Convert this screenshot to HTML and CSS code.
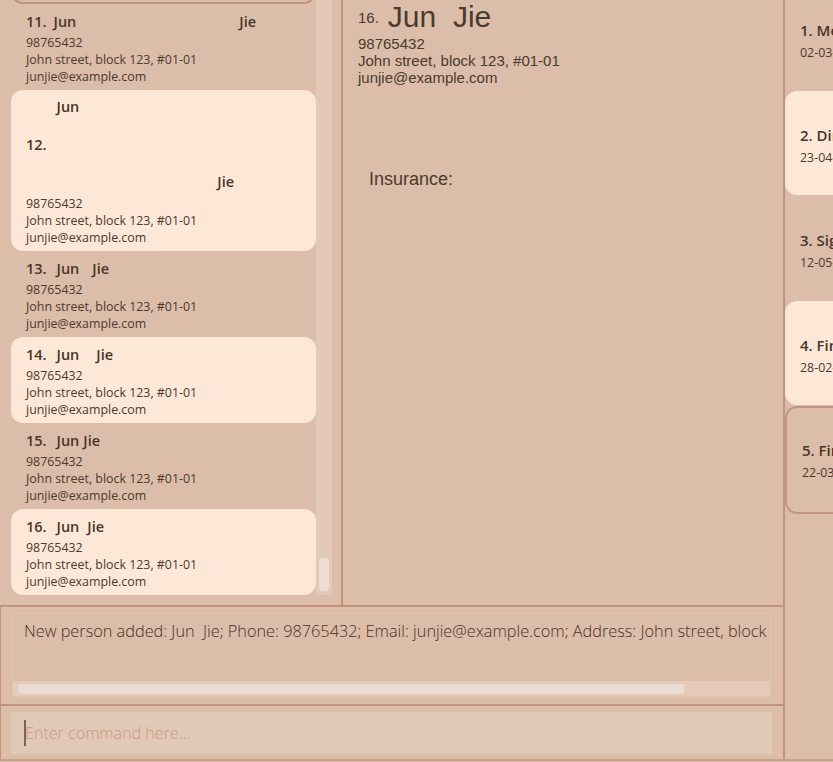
FILE: index.html
```html
<!DOCTYPE html>
<html lang="en">
<head>
<meta charset="utf-8">
<title>Address Book</title>
<link rel="stylesheet" href="styles.css">
</head>
<body>
<div class="app">
  <div class="main">
    <div class="top">
      <div class="list-panel">
        <div class="list">
          <div class="card selected first">
            <div class="name-row"><span class="idx">10.</span><span class="nm">Jun</span><span class="nm g4">Jie</span></div>
            <div class="info">
              <div class="line">98765432</div>
              <div class="line">John street, block 123, #01-01</div>
              <div class="line">junjie@example.com</div>
            </div>
          </div>
          <div class="card">
            <div class="name-row"><span class="idx narrow">11.</span><span class="nm">Jun</span><span class="nm g163">Jie</span></div>
            <div class="info">
              <div class="line">98765432</div>
              <div class="line">John street, block 123, #01-01</div>
              <div class="line">junjie@example.com</div>
            </div>
          </div>
          <div class="card hl tall-card">
            <div class="name-row tall"><span class="idx">12.</span><div class="split"><span class="nm up">Jun</span><span class="nm down g138">Jie</span></div></div>
            <div class="info">
              <div class="line">98765432</div>
              <div class="line">John street, block 123, #01-01</div>
              <div class="line">junjie@example.com</div>
            </div>
          </div>
          <div class="card">
            <div class="name-row"><span class="idx">13.</span><span class="nm">Jun</span><span class="nm g13">Jie</span></div>
            <div class="info">
              <div class="line">98765432</div>
              <div class="line">John street, block 123, #01-01</div>
              <div class="line">junjie@example.com</div>
            </div>
          </div>
          <div class="card hl">
            <div class="name-row"><span class="idx">14.</span><span class="nm">Jun</span><span class="nm g17">Jie</span></div>
            <div class="info">
              <div class="line">98765432</div>
              <div class="line">John street, block 123, #01-01</div>
              <div class="line">junjie@example.com</div>
            </div>
          </div>
          <div class="card">
            <div class="name-row"><span class="idx">15.</span><span class="nm">Jun</span><span class="nm g4">Jie</span></div>
            <div class="info">
              <div class="line">98765432</div>
              <div class="line">John street, block 123, #01-01</div>
              <div class="line">junjie@example.com</div>
            </div>
          </div>
          <div class="card hl">
            <div class="name-row"><span class="idx">16.</span><span class="nm">Jun</span><span class="nm g8">Jie</span></div>
            <div class="info">
              <div class="line">98765432</div>
              <div class="line">John street, block 123, #01-01</div>
              <div class="line">junjie@example.com</div>
            </div>
          </div>
        </div>
        <div class="vscroll"><div class="vthumb"></div></div>
      </div>
      <div class="detail">
        <div class="d-name"><span class="d-idx">16.</span><span class="d-full">Jun&nbsp;&nbsp;Jie</span></div>
        <div class="d-info">
          <div class="d-line">98765432</div>
          <div class="d-line">John street, block 123, #01-01</div>
          <div class="d-line">junjie@example.com</div>
        </div>
        <div class="d-ins">Insurance:</div>
      </div>
    </div>
    <div class="result">
      <div class="result-inner">
        <div class="result-text">New person added: Jun&nbsp;&nbsp;Jie; Phone: 98765432; Email: junjie@example.com; Address: John street, block 123, #01-01; Tags: </div>
        <div class="hscroll"><div class="hthumb"></div></div>
      </div>
    </div>
    <div class="command">
      <div class="cmd-field"><span class="caret"></span><span class="placeholder">Enter command here...</span></div>
    </div>
  </div>
  <div class="events">
    <div class="event-list">
      <div class="ev first"><div class="ev-title">1. Meeting with client</div><div class="ev-date">02-03-2024 10:00</div></div>
      <div class="ev hl"><div class="ev-title">2. Dinner appointment</div><div class="ev-date">23-04-2024 19:00</div></div>
      <div class="ev"><div class="ev-title">3. Sign contract</div><div class="ev-date">12-05-2024 14:00</div></div>
      <div class="ev hl"><div class="ev-title">4. Financial review</div><div class="ev-date">28-02-2024 09:00</div></div>
      <div class="ev selected"><div class="ev-title">5. Final check</div><div class="ev-date">22-03-2024 16:00</div></div>
    </div>
  </div>
</div>
</body>
</html>
```
FILE: styles.css
```css
* { box-sizing: border-box; margin: 0; padding: 0; }
html, body { width: 833px; height: 762px; overflow: hidden; background: #dcbda9; }
body { font-family: "Open Sans", "Noto Sans", sans-serif; color: #4a3a2f; }

.app { display: flex; height: 761px; border-bottom: 2px solid #c7a08a; }
.main { width: 785px; flex: none; display: flex; flex-direction: column; border-right: 2px solid #c2927a; }

.top { height: 605px; display: flex; flex: none; }
.list-panel { width: 343px; flex: none; display: flex; padding: 0 9px 10px 11px; border-right: 2px solid #c2927a; }
.list { width: 305px; flex: none; overflow: hidden; }

.card { height: 86px; padding: 6px 15px; border-radius: 12px; }
.card.hl { background: #fde8d8; }
.card.selected { border: 2px solid #c2927a; padding: 4px 13px; }
.card.first { margin-top: -82px; }
.card.tall-card { height: 161px; }

.name-row { height: 22px; display: flex; align-items: center; font-weight: 600; font-size: 14.5px; color: #473629; }
.name-row.tall { height: 97px; }
.idx { margin-right: 10px; }
.idx.narrow { margin-right: 7px; }
.split { display: flex; align-self: stretch; }
.nm.up { align-self: flex-start; line-height: 22px; }
.nm.down { align-self: flex-end; line-height: 22px; }
.g4 { margin-left: 4px; }
.g8 { margin-left: 8px; }
.g13 { margin-left: 13px; }
.g17 { margin-left: 17px; }
.g138 { margin-left: 138px; }
.g163 { margin-left: 163px; }

.info { padding-top: 2px; }
.line { font-size: 12.4px; line-height: 17px; color: #4a3a2f; white-space: nowrap; }

.vscroll { width: 16px; flex: none; background: #e2c9b8; display: flex; flex-direction: column; justify-content: flex-end; padding: 0 3px 4px; }
.vthumb { height: 33px; background: #ecdcd2; border-radius: 3px; }

.detail { flex: 1; padding: 0 0 0 15px; font-family: "Liberation Sans", Arial, sans-serif; color: #4a3a2f; }
.d-name { height: 34px; display: flex; align-items: center; }
.d-idx { font-size: 15px; margin-right: 9px; }
.d-full { font-size: 30px; }
.d-info { padding-top: 1px; }
.d-line { font-size: 15px; line-height: 17px; }
.d-ins { font-size: 18px; margin: 83px 0 0 11px; }

.result { height: 99px; flex: none; border-top: 2px solid #c2927a; border-left: 1px solid #c2927a; padding: 6px 12px 7px 11px; }
.result-inner { height: 84px; border: 1px solid #dfc4b1; display: flex; flex-direction: column; justify-content: space-between; overflow: hidden; }
.result-text { font-size: 16.3px; font-weight: 300; padding: 6px 0 0 11px; white-space: nowrap; color: #4a3026; }
.hscroll { height: 15px; flex: none; background: #e3cab9; padding: 3px 0 2px 5px; }
.hthumb { width: 666px; height: 10px; background: #eddcd2; border-radius: 3px; }

.command { flex: 1; border-top: 2px solid #c2927a; border-left: 1px solid #c2927a; padding: 6px 11px 5px 10px; }
.cmd-field { height: 42px; background: #e2c8b6; display: flex; align-items: center; padding-left: 13px; }
.caret { width: 2px; height: 26px; background: #7d6556; }
.placeholder { font-size: 16.1px; font-weight: 300; color: #c99a80; margin-left: -1px; }

.events { flex: 1; overflow: hidden; }
.event-list { width: 300px; }
.ev { height: 104px; margin-bottom: 1px; padding: 33px 15px 0; border-radius: 12px; white-space: nowrap; }
.ev.first { margin-top: -14px; }
.ev.hl { background: #fde8d8; }
.ev.selected { border: 2px solid #c49580; padding: 31px 13px 0 15px; height: 108px; }
.ev-title { font-size: 15px; font-weight: 600; line-height: 22px; color: #473629; }
.ev-date { font-size: 12.4px; line-height: 20px; padding-top: 2px; color: #4a3a2f; }
```
